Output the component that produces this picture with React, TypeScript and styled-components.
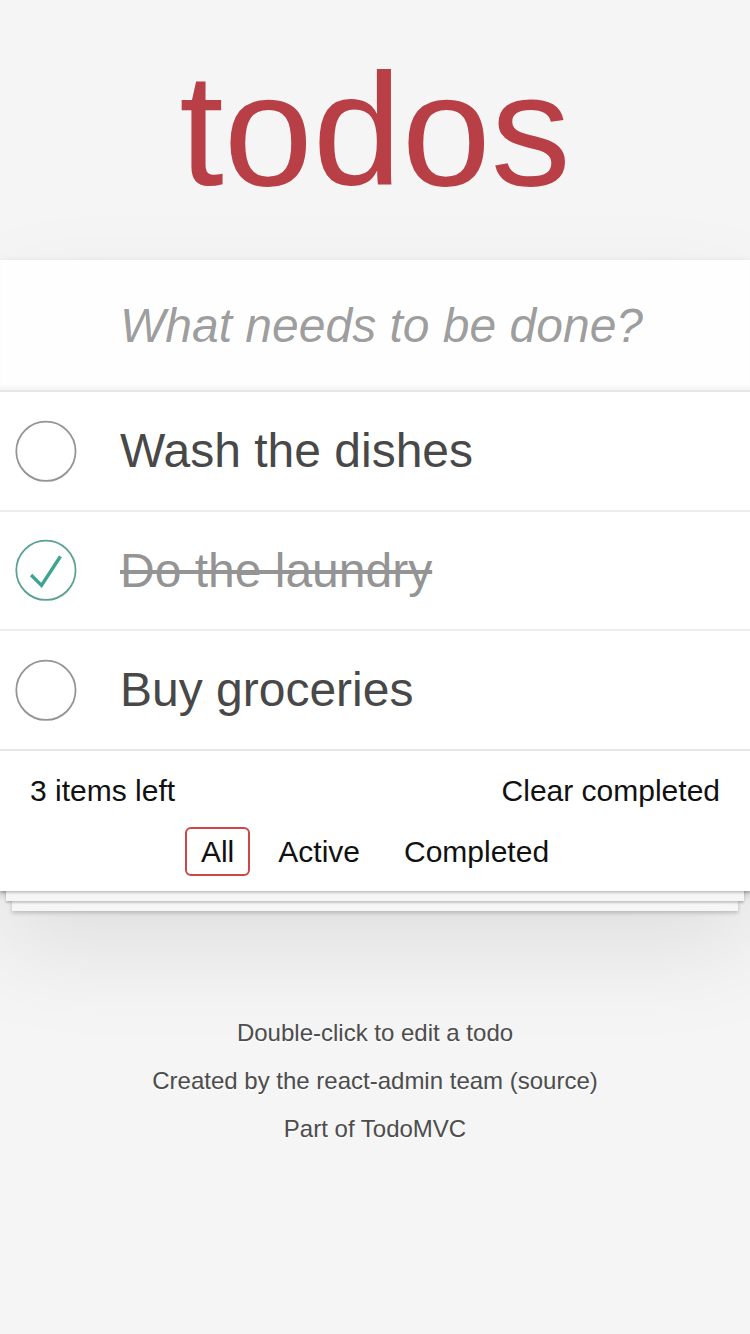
import React from "react";
import styled, { createGlobalStyle } from "styled-components";

const GlobalStyle = createGlobalStyle`
  html, body {
    margin: 0;
    padding: 0;
  }
  body {
    background: #f5f5f5;
    color: #111111;
    font-family: "Liberation Sans", Arial, Helvetica, sans-serif;
    font-size: 28px;
    line-height: 39.2px;
  }
  * { box-sizing: border-box; }
`;

const Page = styled.div`
  display: flex;
  flex-direction: column;
  padding-top: 50px;
`;

const Title = styled.h1`
  margin: 0 0 50px;
  height: 160px;
  font-size: 160px;
  line-height: 160px;
  font-weight: 200;
  text-align: center;
  color: #b83f45;
`;

const Card = styled.section`
  background: #ffffff;
  box-shadow: 0 4px 8px 0 rgba(0, 0, 0, 0.2), 0 50px 100px 0 rgba(0, 0, 0, 0.1);
`;

const NewTodo = styled.input`
  display: block;
  width: 100%;
  margin: 0;
  padding: 31px 32px 31px 120px;
  border: none;
  outline: none;
  font-family: inherit;
  font-size: 48px;
  line-height: 67.2px;
  height: 130px;
  color: inherit;
  background: rgba(0, 0, 0, 0.003);
  box-shadow: inset 0 -4px 2px rgba(0, 0, 0, 0.03);

  &::placeholder {
    font-style: italic;
    font-weight: 400;
    color: rgba(0, 0, 0, 0.4);
  }
`;

const TodoList = styled.ul`
  margin: 0;
  padding: 0;
  list-style: none;
  border-top: 2px solid #e6e6e6;
`;

const TodoItem = styled.li`
  display: flex;
  align-items: center;
  border-bottom: 2px solid #ededed;

  &:last-child {
    border-bottom: none;
  }
`;

const ToggleBox = styled.span`
  flex: 0 0 120px;
  display: flex;
  align-items: center;
  height: 80px;
`;

const Label = styled.label<{ $done: boolean }>`
  flex: 1;
  padding: 30px 30px 30px 0;
  font-size: 48px;
  line-height: 57.6px;
  font-weight: 400;
  color: ${(p) => (p.$done ? "#949494" : "#484848")};
  text-decoration: ${(p) => (p.$done ? "line-through" : "none")};
  word-break: break-all;
`;

const Footer = styled.footer`
  position: relative;
  padding: 20px 30px;
  border-top: 2px solid #e6e6e6;
  font-size: 30px;
  line-height: 39.2px;
  display: flex;
  flex-direction: column;
  gap: 21.6px;

  &::before {
    content: "";
    position: absolute;
    right: 0;
    bottom: 0;
    left: 0;
    height: 100px;
    overflow: hidden;
    box-shadow: 0 2px 2px rgba(0, 0, 0, 0.2), 0 16px 0 -6px #f6f6f6,
      0 18px 2px -6px rgba(0, 0, 0, 0.2), 0 32px 0 -12px #f6f6f6,
      0 34px 4px -12px rgba(0, 0, 0, 0.2);
  }
`;

const FooterRow = styled.div`
  position: relative;
  display: flex;
  justify-content: space-between;
  height: 39.2px;
`;

const ClearButton = styled.button`
  margin: 0;
  padding: 0;
  border: none;
  background: none;
  font-family: inherit;
  font-size: 30px;
  line-height: 39.2px;
  color: inherit;
  cursor: pointer;
`;

const Filters = styled.ul`
  position: relative;
  margin: 0;
  padding: 0;
  list-style: none;
  text-align: center;
  height: 39.2px;
  line-height: 39.2px;
`;

const FilterItem = styled.li`
  display: inline;
`;

const FilterLink = styled.a<{ $selected?: boolean }>`
  color: inherit;
  margin: 6px;
  padding: 6px 14px;
  text-decoration: none;
  border: 2px solid ${(p) => (p.$selected ? "#ce4646" : "transparent")};
  border-radius: 6px;
`;

const Info = styled.footer`
  margin-top: 130px;
  color: #4d4d4d;
  font-size: 24px;
  text-align: center;
  text-shadow: 0 2px 0 rgba(255, 255, 255, 0.5);
`;

const InfoLine = styled.p`
  margin: 0 0 24px;
  line-height: 24px;
`;

const Toggle: React.FC<{ done: boolean }> = ({ done }) => (
  <svg width="80" height="80" viewBox="-10 -18 100 135">
    <circle
      cx="50"
      cy="50"
      r="50"
      fill="none"
      stroke={done ? "#59A193" : "#949494"}
      strokeWidth="3"
    />
    {done && <path fill="#3EA390" d="M72 25L42 71 27 56l-4 4 20 20 34-52z" />}
  </svg>
);

const todos = [
  { text: "Wash the dishes", done: false },
  { text: "Do the laundry", done: true },
  { text: "Buy groceries", done: false },
];

export default function App() {
  return (
    <>
      <GlobalStyle />
      <Page>
        <Title>todos</Title>
        <Card>
          <NewTodo placeholder="What needs to be done?" />
          <TodoList>
            {todos.map((t) => (
              <TodoItem key={t.text}>
                <ToggleBox>
                  <Toggle done={t.done} />
                </ToggleBox>
                <Label $done={t.done}>{t.text}</Label>
              </TodoItem>
            ))}
          </TodoList>
          <Footer>
            <FooterRow>
              <span>3 items left</span>
              <ClearButton>Clear completed</ClearButton>
            </FooterRow>
            <Filters>
              <FilterItem>
                <FilterLink href="#/" $selected>
                  All
                </FilterLink>
              </FilterItem>
              <FilterItem>
                <FilterLink href="#/active">Active</FilterLink>
              </FilterItem>
              <FilterItem>
                <FilterLink href="#/completed">Completed</FilterLink>
              </FilterItem>
            </Filters>
          </Footer>
        </Card>
        <Info>
          <InfoLine>Double-click to edit a todo</InfoLine>
          <InfoLine>Created by the react-admin team (source)</InfoLine>
          <InfoLine>Part of TodoMVC</InfoLine>
        </Info>
      </Page>
    </>
  );
}
